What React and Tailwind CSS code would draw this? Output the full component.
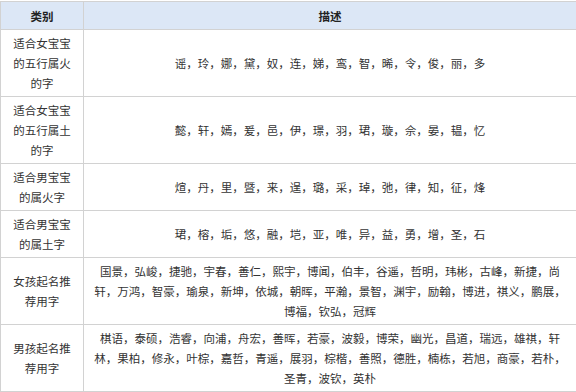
import React from "react";

const rows = [
  {
    cat: ["适合女宝宝", "的五行属火", "的字"],
    desc: "谣，玲，娜，黛，奴，连，娣，鸾，智，晞，令，俊，丽，多",
  },
  {
    cat: ["适合女宝宝", "的五行属土", "的字"],
    desc: "懿，轩，嫣，爰，邑，伊，璟，羽，珺，璇，佘，晏，韫，忆",
  },
  {
    cat: ["适合男宝宝", "的属火字"],
    desc: "煊，丹，里，暨，来，逞，璐，采，琸，弛，律，知，征，烽",
  },
  {
    cat: ["适合男宝宝", "的属土字"],
    desc: "珺，榕，垢，悠，融，垲，亚，唯，异，益，勇，增，圣，石",
  },
  {
    cat: ["女孩起名推", "荐用字"],
    desc: "国景，弘峻，捷驰，宇春，善仁，熙宇，博闻，伯丰，谷遥，哲明，玮彬，古峰，新捷，尚轩，万鸿，智豪，瑜泉，新坤，依城，朝晖，平瀚，景智，渊宇，励翰，博进，祺义，鹏展，博福，钦弘，冠辉",
  },
  {
    cat: ["男孩起名推", "荐用字"],
    desc: "棋语，泰硕，浩睿，向浦，舟宏，善晖，若豪，波毅，博荣，幽光，昌道，瑞远，雄祺，轩林，果柏，修永，叶棕，嘉哲，青遥，展羽，棕楷，善照，德胜，楠栋，若旭，商豪，若朴，圣青，波钦，英朴",
  },
];

export default function App() {
  return (
    <div className="w-[576px] h-[392px] overflow-hidden bg-white pt-px font-['Noto_Sans_CJK_SC','Noto_Sans',sans-serif] text-[11.5px] leading-[20px] text-[#333]">
      <table className="w-[577px] border-collapse table-fixed">
        <colgroup>
          <col className="w-[83px]" />
          <col />
        </colgroup>
        <thead>
          <tr className="bg-[#dce7f6] h-[28px]">
            <th className="border border-[#d2d2d2] font-bold text-center text-[#222]">类别</th>
            <th className="border border-[#d2d2d2] font-bold text-center text-[#222]">描述</th>
          </tr>
        </thead>
        <tbody>
          {rows.map((r, i) => (
            <tr key={i}>
              <td className="border border-[#d2d2d2] text-center px-1 py-[3px]">
                {r.cat.map((line, j) => (
                  <div key={j}>{line}</div>
                ))}
              </td>
              <td className="border border-[#d2d2d2] text-center px-[10px] py-[3px] align-middle">
                {r.desc}
              </td>
            </tr>
          ))}
        </tbody>
      </table>
    </div>
  );
}
